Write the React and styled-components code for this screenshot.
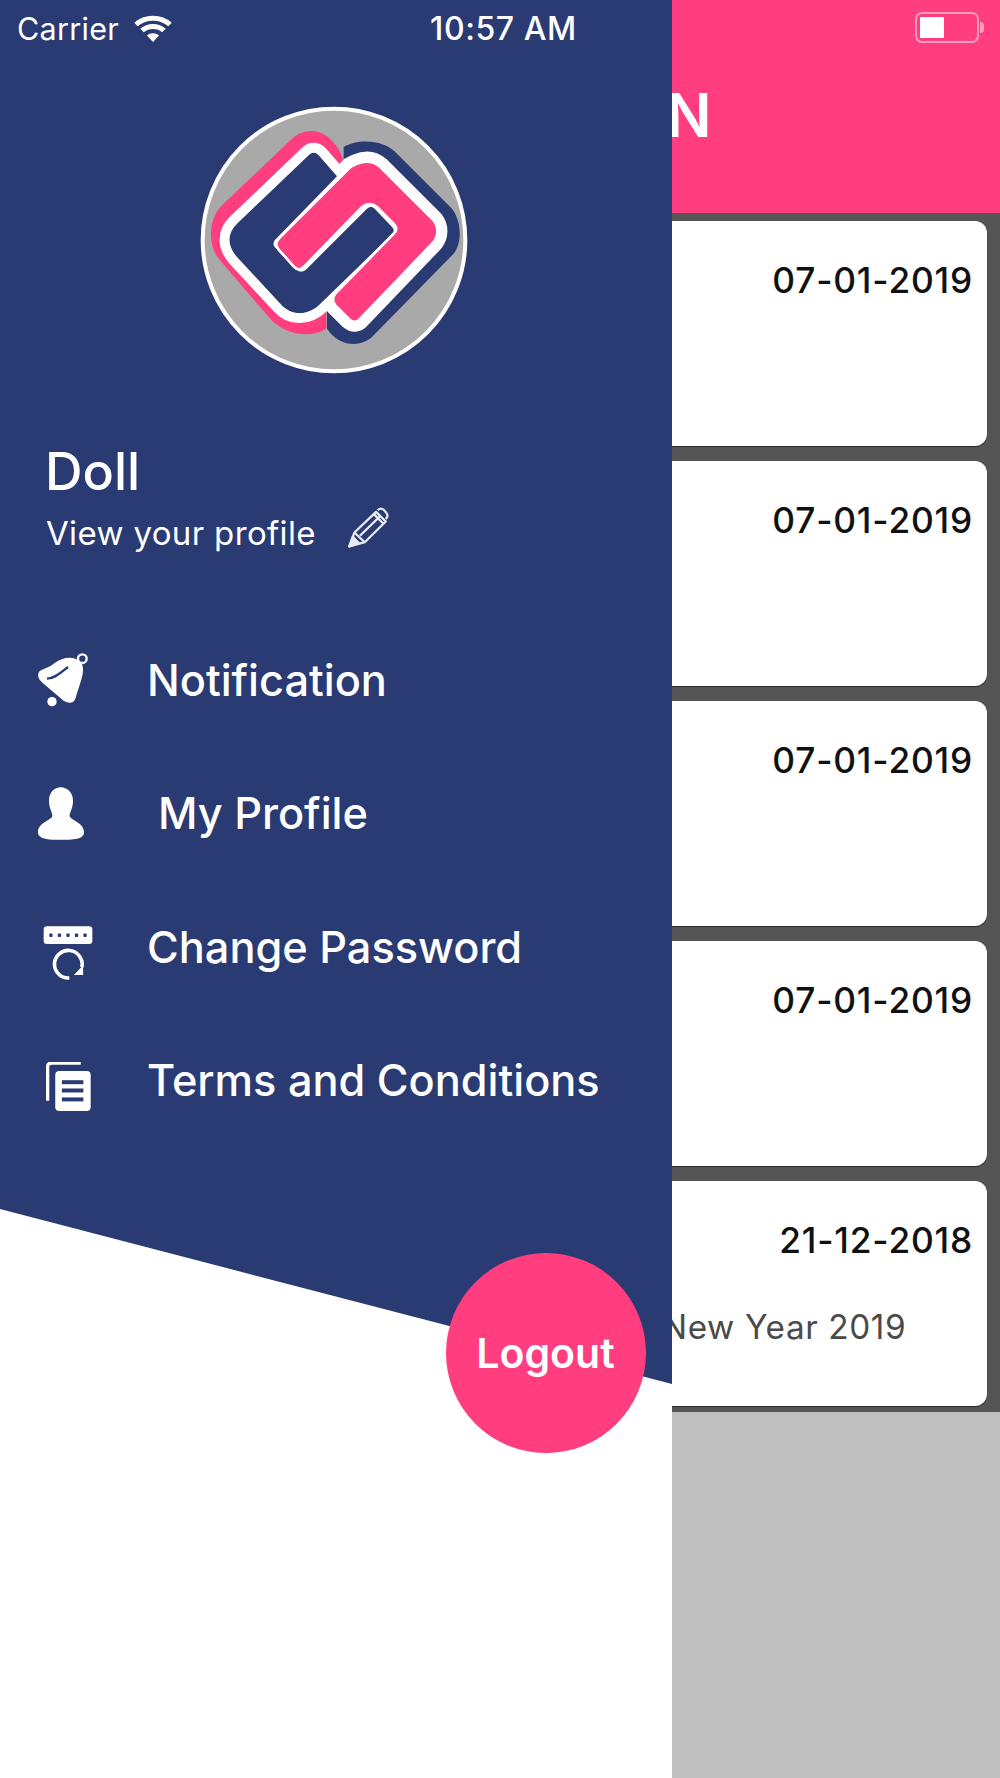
import React from "react";
import styled, { createGlobalStyle } from "styled-components";

const NAVY = "#2a3a72";
const PINK = "#ff3d7f";

const GlobalStyle = createGlobalStyle`
  html, body {
    margin: 0;
    padding: 0;
    background: #bfbfbf;
  }
  * {
    box-sizing: border-box;
  }
`;

const Screen = styled.div`
  display: flex;
  width: 1000px;
  height: 1778px;
  overflow: hidden;
  font-family: Inter, "Liberation Sans", sans-serif;
`;

// Drawer
const Drawer = styled.aside`
  position: relative;
  flex: 0 0 672px;
  background: #fff;
`;

const DrawerPanel = styled.div`
  height: 1384px;
  background: ${NAVY};
  color: #fff;
  clip-path: polygon(0 0, 100% 0, 100% 100%, 0 1209px);
`;

const StatusBar = styled.div`
  display: flex;
  align-items: center;
  height: 56px;
  padding-left: 17px;
  font-size: 30.5px;
  letter-spacing: 0.3px;
`;

const Carrier = styled.span`
  width: 117px;
`;

const Clock = styled.span`
  margin-left: 258px;
  font-size: 32px;
  font-weight: 500;
  letter-spacing: 0.6px;
`;

const LogoWrap = styled.div`
  display: flex;
  justify-content: center;
  padding: 49px 5px 0 0;
`;

const Profile = styled.div`
  padding: 67px 0 0 45px;
`;

const UserName = styled.div`
  font-size: 52px;
  line-height: 60px;
  font-weight: 500;
`;

const ProfileLink = styled.div`
  display: flex;
  align-items: center;
  gap: 31px;
  margin-top: 8px;
  padding-left: 1px;
  font-size: 33px;
  line-height: 46px;
  letter-spacing: 0.35px;
`;

const PencilSlot = styled.span`
  display: flex;
  margin-top: -10px;
`;

const Menu = styled.nav`
  display: flex;
  flex-direction: column;
  padding: 57px 0 0 38px;
`;

const MenuRow = styled.div`
  display: flex;
  align-items: center;
  height: 133.5px;
`;

const MenuIcon = styled.span`
  display: flex;
  flex: 0 0 109px;
  padding-left: ${(p) => p.$shift || 0}px;
  padding-top: ${(p) => p.$drop || 0}px;
`;

const MenuLabel = styled.span`
  margin-left: ${(p) => p.$indent || 0}px;
  font-size: 43.3px;
  font-weight: 500;
`;

const LogoutButton = styled.button`
  position: absolute;
  left: 445.5px;
  top: 1252.5px;
  width: 200px;
  height: 200px;
  border: 0;
  border-radius: 50%;
  background: ${PINK};
  color: #fff;
  font-family: inherit;
  font-size: 41px;
  font-weight: 600;
`;

// Screen behind the drawer
const Main = styled.main`
  display: flex;
  flex: 1;
  flex-direction: column;
  min-width: 0;
  overflow: hidden;
  background: #bfbfbf;
`;

const Header = styled.header`
  position: relative;
  height: 213px;
  background: ${PINK};
  color: #fff;
`;

const Battery = styled.div`
  position: absolute;
  left: 243px;
  top: 12px;
  width: 64px;
  height: 31px;
  padding: 3px;
  border: 2px solid #ff9dbf;
  border-radius: 7px;

  &::before {
    content: "";
    display: block;
    width: 24px;
    height: 100%;
    background: #fff;
  }

  &::after {
    content: "";
    position: absolute;
    right: -7px;
    top: 8px;
    width: 4px;
    height: 11px;
    border-radius: 0 4px 4px 0;
    background: #ff9dbf;
  }
`;

const Title = styled.h1`
  margin: 0 0 0 -6px;
  padding-top: 79px;
  font-size: 60px;
  line-height: 72px;
  font-weight: 600;
`;

const CardList = styled.div`
  display: flex;
  flex-direction: column;
  gap: 15px;
  padding: 8px 13px 6px 0;
  background: #555;
`;

const Card = styled.article`
  height: 225px;
  margin-left: -20px;
  padding: 40px 14px 0 0;
  border-radius: 12px;
  background: #fff;
  box-shadow: 0 1px 1px rgba(0, 0, 0, 0.5);
`;

const CardDate = styled.div`
  color: #111;
  font-size: 35.3px;
  line-height: 40px;
  font-weight: 500;
  text-align: right;
  letter-spacing: 0.8px;
`;

const CardText = styled.div`
  margin: 46px 0 0 10px;
  color: #4a4a4a;
  font-size: 33.3px;
  line-height: 40px;
  letter-spacing: 0.6px;
`;

const Logo = () => (
  <svg width="270" height="270" viewBox="56 44 810 810">
    <circle cx="461" cy="449" r="394" fill="#a9a9a9" stroke="#fff" strokeWidth="12" />
    <path
      d="M490 170C530 145 610 145 650 190L815 355C845 395 845 460 820 490L580 735C550 770 480 775 440 715L440 660L490 300Z"
      fill={NAVY}
    />
    <path
      d="M490 215C480 170 440 122 395 122C365 122 345 135 330 150L125 345C85 385 80 460 115 505L265 680C310 735 390 745 438 715L438 660L480 400Z"
      fill={PINK}
    />
    <g stroke="#fff" strokeWidth="60" strokeLinejoin="round" fill="#fff">
      <path d="M385 195C395 185 405 185 415 195L470 258L283 450C278 458 278 465 285 472L345 535C358 548 370 545 380 535L560 355C568 348 575 348 583 355L635 410C642 418 642 425 635 432L420 640C380 680 330 675 300 640L170 500C140 465 140 430 170 400Z" />
      <path d="M530 220C555 210 580 212 600 230L760 390C775 410 775 435 760 455L540 685C530 697 518 697 508 688L465 645C455 632 455 622 465 610L640 430C650 420 650 410 640 400L590 350C575 338 560 338 545 350L375 525C362 540 350 540 340 528L295 478C285 465 285 455 298 442L510 230Z" />
    </g>
    <path
      d="M385 195C395 185 405 185 415 195L470 258L283 450C278 458 278 465 285 472L345 535C358 548 370 545 380 535L560 355C568 348 575 348 583 355L635 410C642 418 642 425 635 432L420 640C380 680 330 675 300 640L170 500C140 465 140 430 170 400Z"
      fill={NAVY}
    />
    <path
      d="M530 220C555 210 580 212 600 230L760 390C775 410 775 435 760 455L540 685C530 697 518 697 508 688L465 645C455 632 455 622 465 610L640 430C650 420 650 410 640 400L590 350C575 338 560 338 545 350L375 525C362 540 350 540 340 528L295 478C285 465 285 455 298 442L510 230Z"
      fill={PINK}
      stroke="#fff"
      strokeWidth="8"
    />
  </svg>
);

const WifiIcon = () => (
  <svg width="38" height="27" viewBox="0 0 38 27" fill="none" stroke="#fff" strokeWidth="5">
    <path d="M2 9.5C11 1 27 1 36 9.5" />
    <path d="M8 15.5C14 10 24 10 30 15.5" />
    <path d="M19 27L13 20.5C16 17.5 22 17.5 25 20.5Z" fill="#fff" stroke="none" />
  </svg>
);

const PencilIcon = () => (
  <svg width="42" height="42" viewBox="945 233 130 130" fill="none" stroke="#e8eaf2" strokeWidth="7" strokeLinejoin="round">
    <path d="M952 355L968 312L1035 248L1065 278L1000 342Z" />
    <path d="M968 312L1000 342M985 322L1047 262M1028 255L1058 285" />
    <path d="M1040 243Q1050 233 1060 243L1066 250Q1075 260 1065 270" />
    <path d="M952 355L963 325L982 345Z" fill="#e8eaf2" />
  </svg>
);

const BellIcon = () => (
  <svg width="50" height="55" viewBox="55 38 150 165">
    <path
      d="M56 100C58 86 85 85 105 68C130 50 165 45 185 68C198 90 184 120 168 172C162 192 145 188 133 182L68 127C58 118 54 110 56 100Z"
      fill="#fff"
    />
    <path d="M82 115C105 115 125 95 145 80" fill="none" stroke={NAVY} strokeWidth="7" />
    <circle cx="97" cy="184" r="14" fill="#fff" />
    <circle cx="188" cy="55" r="13" fill={NAVY} stroke="#fff" strokeWidth="7" />
  </svg>
);

const PersonIcon = () => (
  <svg width="46" height="53" viewBox="55 440 138 158">
    <path
      d="M88 480C88 455 105 440 123 440C142 440 160 455 160 480C160 505 150 515 150 525C150 540 193 545 193 575C193 592 175 598 123 598C70 598 55 590 55 575C55 545 98 540 98 525C98 515 88 505 88 480Z"
      fill="#fff"
    />
  </svg>
);

const KeyResetIcon = () => (
  <svg width="50" height="54" viewBox="68 48 152 162">
    <rect x="70" y="48" width="148" height="54" rx="10" fill="#fff" />
    {[92, 118, 144, 170, 196].map((x) => (
      <rect key={x} x={x - 5} y="70" width="10" height="10" rx="3" fill={NAVY} />
    ))}
    <path d="M148 205A42 42 0 1 1 186 172" fill="none" stroke="#fff" strokeWidth="11" />
    <path d="M162 196L190 196L190 166Z" fill="#fff" />
  </svg>
);

const DocsIcon = () => (
  <svg width="46" height="49" viewBox="75 455 137 148">
    <path d="M82 572L82 470Q82 458 95 458L182 458" fill="none" stroke="#fff" strokeWidth="10" />
    <rect x="105" y="482" width="107" height="121" rx="12" fill="#fff" />
    {[510, 535, 562].map((y) => (
      <rect key={y} x="125" y={y} width="65" height="12" fill={NAVY} />
    ))}
  </svg>
);

const menuItems = [
  { label: "Notification", icon: <BellIcon />, shift: 0, drop: 2 },
  { label: "My Profile", icon: <PersonIcon />, shift: 0, drop: 0, indent: 11 },
  { label: "Change Password", icon: <KeyResetIcon />, shift: 5, drop: 12 },
  { label: "Terms and Conditions", icon: <DocsIcon />, shift: 7, drop: 12 },
];

const cards = [
  { date: "07-01-2019" },
  { date: "07-01-2019" },
  { date: "07-01-2019" },
  { date: "07-01-2019" },
  { date: "21-12-2018", text: "New Year 2019" },
];

const App = () => {
  return (
    <Screen>
      <GlobalStyle />
      <Drawer>
        <DrawerPanel>
          <StatusBar>
            <Carrier>Carrier</Carrier>
            <WifiIcon />
            <Clock>10:57 AM</Clock>
          </StatusBar>
          <LogoWrap>
            <Logo />
          </LogoWrap>
          <Profile>
            <UserName>Doll</UserName>
            <ProfileLink>
              View your profile
              <PencilSlot>
                <PencilIcon />
              </PencilSlot>
            </ProfileLink>
          </Profile>
          <Menu>
            {menuItems.map((item) => (
              <MenuRow key={item.label}>
                <MenuIcon $shift={item.shift} $drop={item.drop}>{item.icon}</MenuIcon>
                <MenuLabel $indent={item.indent}>{item.label}</MenuLabel>
              </MenuRow>
            ))}
          </Menu>
        </DrawerPanel>
        <LogoutButton>Logout</LogoutButton>
      </Drawer>
      <Main>
        <Header>
          <Battery />
          <Title>N</Title>
        </Header>
        <CardList>
          {cards.map((card, i) => (
            <Card key={i}>
              <CardDate>{card.date}</CardDate>
              {card.text && <CardText>{card.text}</CardText>}
            </Card>
          ))}
        </CardList>
      </Main>
    </Screen>
  );
};

export default App;
